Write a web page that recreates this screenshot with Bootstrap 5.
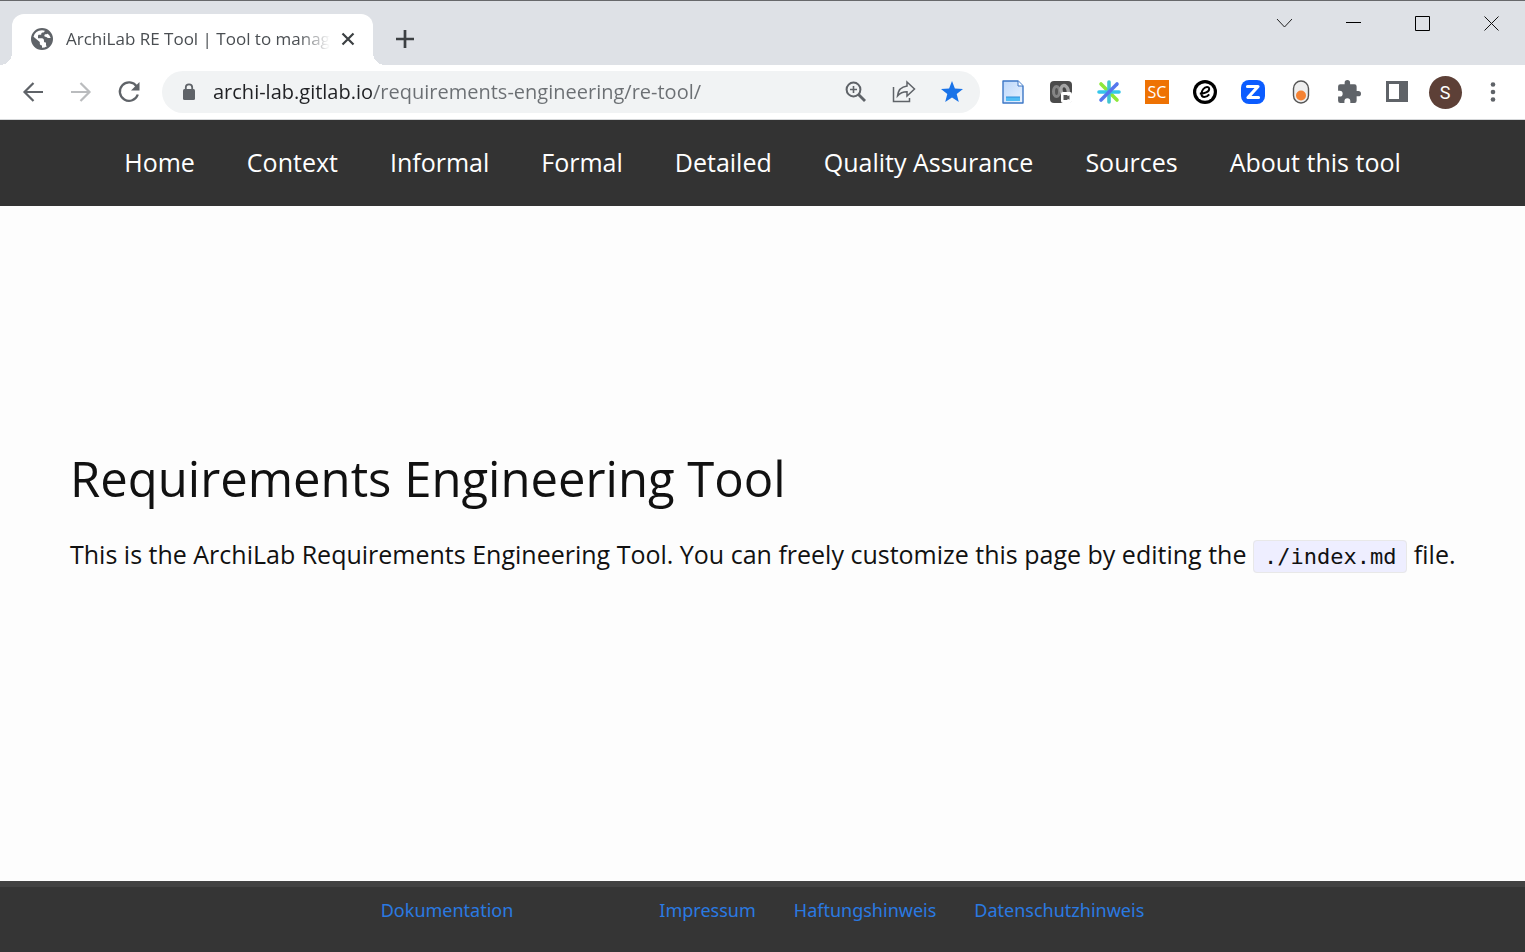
<!DOCTYPE html>
<html lang="en">
<head>
<meta charset="utf-8">
<meta name="viewport" content="width=device-width, initial-scale=1">
<title>ArchiLab RE Tool | Tool to manage requirements</title>
<link href="https://cdn.jsdelivr.net/npm/bootstrap@5.3.0/dist/css/bootstrap.min.css" rel="stylesheet">
<style>
  body { font-family: "Open Sans", "Noto Sans", sans-serif; background: #fdfdfd; color: #111; }
  button { border: 0; background: transparent; padding: 0; }
  svg { display: block; flex: none; }

  .tab-strip { height: 65px; background: #dee1e6; border-top: 1px solid #67686b; padding-left: 12px; }
  .page-tab { position: relative; width: 361px; height: 51px; background: #fff; border-radius: 12px 12px 0 0; padding: 0 16px 2px 18px; color: #4a4e52; }
  .page-tab::before, .page-tab::after { content: ""; position: absolute; bottom: 0; width: 12px; height: 12px; }
  .page-tab::before { right: 100%; background: radial-gradient(circle at 0 0, transparent 12px, #fff 12px); }
  .page-tab::after { left: 100%; background: radial-gradient(circle at 100% 0, transparent 12px, #fff 12px); }
  .tab-title { font-size: 17px; width: 268px; -webkit-mask-image: linear-gradient(90deg, #000 236px, transparent 268px); }
  .new-tab { width: 64px; height: 52px; }
  .win-btn { width: 69px; height: 44px; }

  .toolbar { height: 55px; padding: 0 8px 0 9px; gap: 9px; background: #fff; border-bottom: 1px solid #d5d7d9; }
  .tool-btn { width: 48px; height: 42px; color: #5f6368; }
  .address { height: 42px; border-radius: 21px; background: #f1f3f4; padding: 0 4px 0 20px; }
  .address input { border: 0; outline: 0; margin-left: 17px; padding: 0; font-size: 20px; color: transparent;
    background: linear-gradient(90deg, #202124 160px, #6b6f73 160px); -webkit-background-clip: text; background-clip: text; }
  .sc-logo { width: 24px; height: 24px; background: #ee7203; color: #fff; font-size: 16px; line-height: 24px; }
  .profile { width: 33px; height: 33px; background: #5d4037; color: #fff; font-size: 18px; font-family: Roboto, sans-serif; }

  .site-nav { min-height: 86px; background: #333; gap: 16px 52px; padding: 0 16px; font-size: 25px; }
  .site-nav a { color: #fff; text-decoration: none; }

  main { padding: 0 56px 64px 70px; }
  h1 { font-size: 49px; font-weight: 400; line-height: 60px; margin-bottom: 28px; }
  main p { font-size: 25px; line-height: 36px; }
  main code { font-family: "DejaVu Sans Mono", monospace; font-size: 22px; color: #111; background: #eef; border: 1px solid #e8e8e8; border-radius: 4px; padding: 3px 10px; }

  .site-footer { min-height: 71px; background: #353535; border-top: 6px solid #424242; font-family: "Noto Sans", sans-serif; font-size: 18px; line-height: 28px; padding-top: 9px; gap: 146px; }
  .site-footer a { color: #2a7ae2; text-decoration: none; }
  .legal { gap: 38px; }
</style>
</head>
<body class="d-flex flex-column min-vh-100">

<div class="tab-strip d-flex align-items-end">
  <div class="page-tab d-flex align-items-center">
    <svg width="24" height="24" viewBox="0 0 24 24"><path fill="#5f6368" d="M12 1a11 11 0 1 0 0 22 11 11 0 0 0 0-22zm0 2.200c1 0 1.900.2 2.800.5-.3 1-.9 1.800-2 1.800-1.500 0-1.600 1-1.600 2.300H9c-.8 0-1 .6-1 1.600v1.800h3.800c2 0 2.200 1.500 2.200 3 0 1.200.8 1.300 2 1.300v2.500c0 .7.3 1.100.9 1.200A8.800 8.800 0 0 1 12 20.800V18.500c-1.600 0-2.200-.9-2.200-2.200v-1.200L3.500 9.800A8.800 8.800 0 0 1 12 3.200zM17.500 6.500a8.800 8.800 0 0 1 3.200 4.500h-2.500c-1.500 0-1.400-1.200-2.600-1.200-1.600 0-1.700-2.600 0-2.600 1.200 0 1.900 0 1.900-.7z" fill-rule="evenodd"/></svg>
    <span class="tab-title text-nowrap overflow-hidden ms-2 ps-1">ArchiLab RE Tool | Tool to manage</span>
    <button class="ms-auto" aria-label="Close tab"><svg width="18" height="18" viewBox="0 0 18 18"><path d="M3.500 3.500l11 11M14.500 3.500l-11 11" stroke="#3c4043" stroke-width="2.200"/></svg></button>
  </div>
  <button class="new-tab d-flex align-items-center justify-content-center" aria-label="New tab"><svg width="20" height="20" viewBox="0 0 20 20"><path d="M10 1v18M1 10h18" stroke="#3c4043" stroke-width="2.700"/></svg></button>
  <div class="d-flex ms-auto align-self-start">
    <button class="win-btn d-flex align-items-center justify-content-center" aria-label="Search tabs"><svg width="16" height="16" viewBox="0 0 16 16"><path d="M1 4l7.500 8L16 4" fill="none" stroke="#222"/></svg></button>
    <button class="win-btn d-flex align-items-center justify-content-center" aria-label="Minimize"><svg width="17" height="15" viewBox="0 0 17 15"><path d="M2 6.500h15" stroke="#000"/></svg></button>
    <button class="win-btn d-flex align-items-center justify-content-center" aria-label="Maximize"><svg width="17" height="15" viewBox="0 0 17 15"><path d="M2.500.5h14v14h-14z" fill="none" stroke="#000"/></svg></button>
    <button class="win-btn d-flex align-items-center justify-content-center" aria-label="Close"><svg width="17" height="15" viewBox="0 0 17 15"><path d="M2.500.5l14 14M16.500.5l-14 14" stroke="#111"/></svg></button>
  </div>
</div>

<div class="toolbar d-flex align-items-center">
  <div class="d-flex">
    <button class="tool-btn d-flex align-items-center justify-content-center" aria-label="Back"><svg width="22" height="22" viewBox="0 0 22 22"><path d="M21 11H2.500M11.500 2l-9 9 9 9" fill="none" stroke="currentColor" stroke-width="2.200"/></svg></button>
    <button class="tool-btn d-flex align-items-center justify-content-center" aria-label="Forward"><svg width="22" height="22" viewBox="0 0 22 22"><path d="M1 11h18.500M10.500 2l9 9-9 9" fill="none" stroke="#babcbe" stroke-width="2.200"/></svg></button>
    <button class="tool-btn d-flex align-items-center justify-content-center" aria-label="Reload"><svg width="24" height="24" viewBox="0 0 24 24"><path d="M19.700 6.500A9.200 9.200 0 1 0 20.800 14.500" fill="none" stroke="currentColor" stroke-width="2.300"/><path d="M22.500 2v8.500H14z" fill="currentColor"/></svg></button>
  </div>
  <form class="address d-flex align-items-center flex-grow-1">
    <svg width="14" height="18" viewBox="0 0 14 18"><path d="M3.800 7V4.500a3.200 3.200 0 0 1 6.400 0V7" fill="none" stroke="#5f6368" stroke-width="1.800"/><rect x="1" y="6" width="12" height="11" rx="1.500" fill="#5f6368"/></svg>
    <input class="flex-grow-1" type="text" aria-label="Address" value="archi-lab.gitlab.io/requirements-engineering/re-tool/">
    <button type="button" class="tool-btn d-flex align-items-center justify-content-center" aria-label="Zoom"><svg width="22" height="22" viewBox="0 0 22 22"><circle cx="8.500" cy="8.500" r="6.900" fill="none" stroke="currentColor" stroke-width="2"/><path d="M13.500 13.500l6.500 6.500" stroke="currentColor" stroke-width="2.800"/><path d="M8.500 5v7M5 8.500h7" stroke="currentColor" stroke-width="1.600"/></svg></button>
    <button type="button" class="tool-btn d-flex align-items-center justify-content-center" aria-label="Share"><svg width="24" height="24" viewBox="0 0 24 24"><path d="M1.500 7v14.500h16V18" fill="none" stroke="currentColor" stroke-width="1.500"/><path d="M15 2l7.500 7-7.500 7v-4.200c-4.500 0-7 1.200-9.500 4.200.5-5 3.500-9.200 9.500-10z" fill="none" stroke="currentColor" stroke-width="1.500"/></svg></button>
    <button type="button" class="tool-btn d-flex align-items-center justify-content-center" aria-label="Bookmark"><svg width="22" height="22" viewBox="0 0 22 22"><path fill="#1a73e8" d="M11 0l2.900 7.500 8.100.5-6.300 5.100 2.100 7.900-6.800-4.400L4.200 21l2.100-7.900L0 8l8.100-.5z"/></svg></button>
  </form>
  <div class="d-flex">
    <button class="tool-btn d-flex align-items-center justify-content-center" aria-label="Document extension"><svg width="22" height="24" viewBox="0 0 22 24"><defs><linearGradient id="paper" x2="1" y2="1"><stop stop-color="#bcd7fa"/><stop offset="1" stop-color="#eaf3ff"/></linearGradient></defs><path d="M1 1h15l5 5v17H1z" fill="url(#paper)" stroke="#3c77c6" stroke-width="1.400" stroke-linejoin="round"/><path d="M16 1v5h5" fill="#fff" stroke="#3c77c6"/><path d="M4 17h14v4H4z" fill="#52bdf5"/><path d="M4 17h14" stroke="#2f8edb"/></svg></button>
    <button class="tool-btn d-flex align-items-center justify-content-center" aria-label="Recorder extension"><svg width="22" height="22" viewBox="0 0 22 22"><rect width="22" height="22" rx="4" fill="#4b4b4b"/><ellipse cx="6.500" cy="10.500" rx="3" ry="5" fill="#555" stroke="#858585" stroke-width="3"/><ellipse cx="14.500" cy="9.500" rx="3.500" ry="5" fill="#444" stroke="#a5a5a5" stroke-width="3.400" transform="rotate(-15 14.500 9)"/><rect x="11" y="11" width="11" height="11" rx="2" fill="#fff"/><path d="M13.500 14h4v1.200l2-1v4.600l-2-1V19h-4z" fill="#555"/></svg></button>
    <button class="tool-btn d-flex align-items-center justify-content-center" aria-label="Asterisk extension"><svg width="24" height="24" viewBox="0 0 24 24" stroke-width="3.600" stroke-linecap="round"><path d="M4 4l16 16" stroke="#8ee83a"/><path d="M2 12h20" stroke="#35c6ea"/><path d="M12 2v20" stroke="#41c5cf"/><path d="M20 4L4 20" stroke="#5577ee"/></svg></button>
    <button class="tool-btn d-flex align-items-center justify-content-center" aria-label="SC extension"><span class="sc-logo">SC</span></button>
    <button class="tool-btn d-flex align-items-center justify-content-center" aria-label="E extension"><svg width="24" height="24" viewBox="0 0 24 24"><circle cx="12" cy="12" r="12" fill="#000"/><circle cx="12" cy="12" r="8.800" fill="#fff"/><path d="M6.800 13.500c4.500.2 9.400-1.600 9.400-4.500 0-1.200-.9-1.900-2.200-1.900-3 0-5.500 3.500-5.500 6.700 0 2.200 1.200 3.300 2.800 3.300 2 0 3.600-1 4.900-2.700" fill="none" stroke="#000" stroke-width="2"/></svg></button>
    <button class="tool-btn d-flex align-items-center justify-content-center" aria-label="Z extension"><svg width="24" height="24" viewBox="0 0 24 24"><rect width="24" height="24" rx="8" fill="#0b5cff"/><path d="M6.500 6.500h10.500L7 17.500H17.500" fill="none" stroke="#fff" stroke-width="3.200" stroke-linecap="round" stroke-linejoin="round"/></svg></button>
    <button class="tool-btn d-flex align-items-center justify-content-center" aria-label="Toggle extension"><svg width="18" height="24" viewBox="0 0 18 24"><rect x="1.500" y="1" width="15" height="22" rx="7.500" fill="#eee" stroke="#555" stroke-width="1.400"/><circle cx="9" cy="15.500" r="5" fill="#f58233"/></svg></button>
    <button class="tool-btn d-flex align-items-center justify-content-center" aria-label="Extensions"><svg width="24" height="24" viewBox="1 1 22 22"><path fill="currentColor" d="M20.500 11H19V7a2 2 0 0 0-2-2h-4V3.500a2.500 2.500 0 0 0-5 0V5H4a2 2 0 0 0-2 2v3.800h1.500a2.700 2.700 0 0 1 0 5.400H2V20a2 2 0 0 0 2 2h3.800v-1.500a2.700 2.700 0 0 1 5.400 0V22H17a2 2 0 0 0 2-2v-4h1.500a2.500 2.500 0 0 0 0-5z"/></svg></button>
    <button class="tool-btn d-flex align-items-center justify-content-center" aria-label="Side panel"><svg width="22" height="22" viewBox="0 0 22 22"><path d="M1.500 1.500h19v18h-19z" fill="#fff" stroke="currentColor" stroke-width="3"/><path d="M13 1h8v19h-8z" fill="currentColor"/></svg></button>
    <button class="tool-btn d-flex align-items-center justify-content-center" aria-label="Profile"><span class="profile rounded-circle d-flex align-items-center justify-content-center">S</span></button>
    <button class="tool-btn d-flex align-items-center justify-content-center" aria-label="Menu"><svg width="6" height="20" viewBox="0 0 6 20" fill="currentColor"><circle cx="3" cy="2.500" r="2.300"/><circle cx="3" cy="10" r="2.300"/><circle cx="3" cy="17.500" r="2.300"/></svg></button>
  </div>
</div>

<nav class="site-nav d-flex flex-wrap align-items-center justify-content-center">
  <a href="#">Home</a>
  <a href="#">Context</a>
  <a href="#">Informal</a>
  <a href="#">Formal</a>
  <a href="#">Detailed</a>
  <a href="#">Quality Assurance</a>
  <a href="#">Sources</a>
  <a href="#">About this tool</a>
</nav>

<main class="flex-grow-1 d-flex flex-column justify-content-center">
  <h1>Requirements Engineering Tool</h1>
  <p class="mb-0">This is the ArchiLab Requirements Engineering Tool. You can freely customize this page by editing the <code>./index.md</code> file.</p>
</main>

<footer class="site-footer d-flex flex-wrap align-items-start justify-content-center">
  <a href="#">Dokumentation</a>
  <div class="legal d-flex">
    <a href="#">Impressum</a>
    <a href="#">Haftungshinweis</a>
    <a href="#">Datenschutzhinweis</a>
  </div>
</footer>

<script src="https://cdn.jsdelivr.net/npm/bootstrap@5.3.0/dist/js/bootstrap.bundle.min.js"></script>
</body>
</html>
